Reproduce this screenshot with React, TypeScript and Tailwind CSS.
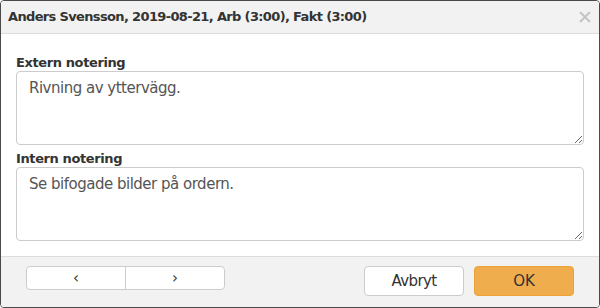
import React from 'react'

const font = { fontFamily: '"DejaVu Sans", Verdana, sans-serif' }

function NoteField({ label, value }: { label: string; value: string }) {
  return (
    <div className="flex flex-col">
      <label className="h-4 text-[13px] leading-4 font-bold text-[#333] tracking-[-0.03em]">{label}</label>
      <textarea
        defaultValue={value}
        className="h-[74px] w-full rounded-[4px] border border-[#ccc] bg-white px-3 pt-[6px] text-[15px] leading-5 text-[#555] tracking-[-0.033em] outline-none"
        style={font}
      />
    </div>
  )
}

export default function App() {
  return (
    <div className="h-[308px] w-[600px] bg-white" style={font}>
      <div className="flex h-full w-full flex-col overflow-hidden rounded-[4px] border border-[#4a4a4a] bg-white">
        <div className="flex h-[33px] shrink-0 items-center justify-between border-b border-[#dcdcdc] bg-[#f2f2f2] pl-[7px] pr-[4px]">
          <span className="text-[13px] font-bold text-[#333] tracking-[-0.05em]">
            Anders Svensson, 2019-08-21, Arb (3:00), Fakt (3:00)
          </span>
          <button aria-label="Stäng" className="flex h-5 w-5 items-center justify-center">
            <svg width="12" height="12" viewBox="0 0 12 12">
              <path d="M1 1L11 11M11 1L1 11" stroke="#c4c4c4" strokeWidth="2" />
            </svg>
          </button>
        </div>

        <div className="flex flex-col gap-[6px] px-[15px] pt-[21px] pb-[15px]">
          <NoteField label="Extern notering" value="Rivning av yttervägg." />
          <NoteField label="Intern notering" value="Se bifogade bilder på ordern." />
        </div>

        <div className="flex flex-1 items-start justify-between border-t border-[#dcdcdc] bg-[#f2f2f2] px-[25px] pt-[9px]">
          <div className="flex h-6 w-[199px] overflow-hidden rounded-[4px] border border-[#ccc] bg-white">
            <button className="flex flex-1 items-center justify-center border-r border-[#ccc] text-[15px] text-[#333]">
              ‹
            </button>
            <button className="flex flex-1 items-center justify-center text-[15px] text-[#333]">›</button>
          </div>
          <div className="flex gap-[10px]">
            <button className="h-[30px] w-[100px] rounded-[4px] border border-[#ccc] bg-white text-[15px] text-[#333] tracking-[-0.04em]">
              Avbryt
            </button>
            <button className="h-[30px] w-[100px] rounded-[4px] border border-[#eea236] bg-[#f0ad4e] text-[15px] text-[#333]">
              OK
            </button>
          </div>
        </div>
      </div>
    </div>
  )
}
